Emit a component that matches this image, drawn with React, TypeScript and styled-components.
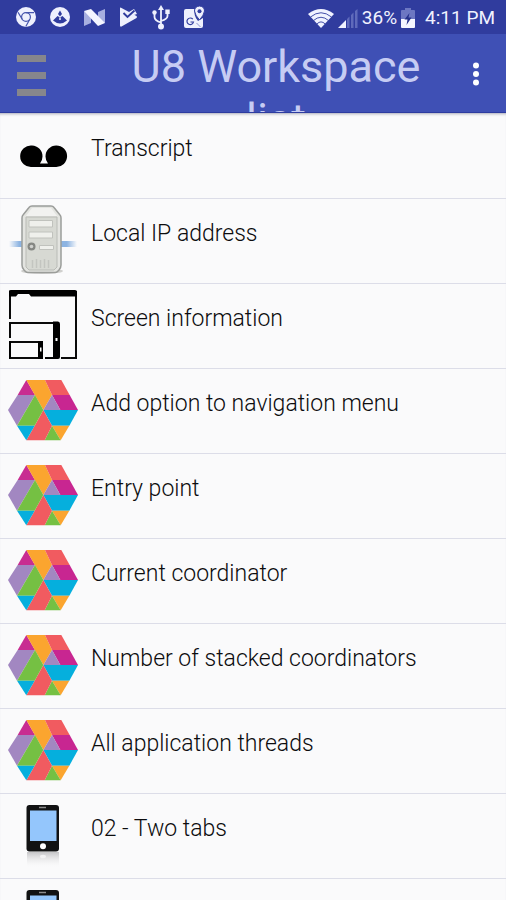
import React from "react";
import styled, { createGlobalStyle } from "styled-components";

const GlobalStyle = createGlobalStyle`
  *, *::before, *::after { box-sizing: border-box; }
  body {
    margin: 0;
    background: #fafafb;
    color: #0c0c0e;
    font-family: Roboto, "Liberation Sans", sans-serif;
  }
`;

const Screen = styled.div`
  display: flex;
  flex-direction: column;
  height: 100vh;
  overflow: hidden;
`;

const StatusBar = styled.div`
  display: flex;
  flex: none;
  align-items: center;
  justify-content: space-between;
  height: 34px;
  padding: 0 11px 0 16px;
  background: #303c9e;
  color: #f0f2ff;
`;

const Notifications = styled.div`
  display: flex;
  align-items: center;
  gap: 14px;
`;

const DeviceState = styled.div`
  display: flex;
  align-items: center;
  gap: 4px;
  padding-top: 2px;
  font-size: 19px;
  line-height: 24px;
`;

const Clock = styled.time`
  margin-left: 6px;
`;

const AppBar = styled.header`
  display: flex;
  flex: none;
  align-items: flex-start;
  height: 79px;
  overflow: hidden;
  padding: 0 10px 0 16px;
  background: #3f50b5;
  border-bottom: 1px solid #2d3ca0;
`;

const BarButton = styled.button<{ $width: number; $align: string }>`
  display: flex;
  flex: none;
  align-items: center;
  justify-content: ${(p) => p.$align};
  width: ${(p) => p.$width}px;
  height: 79px;
  padding: 0;
  border: 0;
  background: none;
  color: #ffffff;
  cursor: pointer;
`;

const Title = styled.h1`
  flex: 1;
  margin: 6px 0 0;
  padding: 0 16px;
  color: #c6ccf3;
  font-size: 45px;
  font-weight: 400;
  line-height: 53px;
  text-align: center;
`;

const List = styled.ul`
  flex: 1;
  min-height: 0;
  overflow: hidden;
  margin: 0;
  padding: 1px 0 0;
  list-style: none;
  box-shadow: inset 0 3px 3px -2px #a9abb8;
`;

const Row = styled.li`
  display: flex;
  height: 85px;
  padding: 6px 8px;
  border-bottom: 1px solid #dcdde8;
`;

const RowIcon = styled.span`
  display: flex;
  flex: none;
  align-items: center;
  justify-content: center;
  width: 70px;
  height: 70px;
`;

const RowLabel = styled.span`
  flex: 1;
  margin: 15px 0 0 13px;
  font-size: 23px;
  font-weight: 300;
  line-height: 28px;
`;

const ChromeIcon = () => (
  <svg width="20" height="20" viewBox="0 0 20 20" aria-hidden="true">
    <circle cx="10" cy="10" r="10" fill="#eef0fd" />
    <g fill="none" stroke="#4655ad" strokeWidth="1.2">
      <circle cx="10" cy="10" r="4.4" />
      <path d="M10 5.6H18M6.2 12.2 2 5.2M13.8 12.2 9.8 19.5" />
    </g>
  </svg>
);

const PeakIcon = () => (
  <svg width="20" height="20" viewBox="0 0 20 20" aria-hidden="true">
    <circle cx="10" cy="10" r="10" fill="#eef0fd" />
    <path d="M3 13.5 7.5 9 10 10.5 12.500 9 17 13.500Q13.500 16.500 10 16.500T3 13.500Z" fill="#303c9e" />
    <path d="M10 3.500 12 7 10 9.500 8 7Z" fill="#303c9e" />
    <path d="M10 10.500V13" stroke="#eef0fd" strokeWidth="1.500" />
  </svg>
);

const NougatIcon = () => (
  <svg width="21" height="17" viewBox="0 0 21 17" aria-hidden="true">
    <path d="M0 2 7 6V14L0 17ZM14 3 21 0V14L14 12Z" fill="#a7afe0" />
    <path d="M0 2 7 0 21 14 14 17Z" fill="#f4f5ff" />
  </svg>
);

const PlayCheckIcon = () => (
  <svg width="19" height="20" viewBox="0 0 19 20" aria-hidden="true">
    <path d="M1 1.500Q1 0 2.500 1L17.500 9Q18.500 10 17.500 11L2.500 19.500Q1 20 1 18.500Z" fill="#eef0fd" />
    <path d="M10 5 15 2 18 7 12 9Z" fill="#eef0fd" />
    <path d="M4.500 6 8.500 10 15.500 3.500" fill="none" stroke="#303c9e" strokeWidth="1.900" />
  </svg>
);

const UsbIcon = () => (
  <svg width="18" height="25" viewBox="0 0 18 25" aria-hidden="true">
    <g fill="none" stroke="#eef0fd" strokeWidth="1.8">
      <path d="M9 3V22M9 17.500Q2.500 15.500 2.500 12V8M9 16Q15.500 14 15.500 11V7" />
    </g>
    <g fill="#eef0fd">
      <path d="M9 0 12 5H6Z" />
      <circle cx="2.500" cy="7.500" r="2.200" />
      <path d="M13.300 4.500h4.400V9h-4.400Z" />
      <circle cx="9" cy="21.500" r="3" />
    </g>
  </svg>
);

const MapIcon = () => (
  <svg width="21" height="22" viewBox="0 0 21 22" aria-hidden="true">
    <path d="M2 3H11Q9 9 14 15L19 12V20Q19 22 17 22H2Q0 22 0 20V5Q0 3 2 3Z" fill="#eef0fd" />
    <path d="M15.500 0Q20.500 .5 20.500 5 20 9 15.500 14 11 9 10.500 5 10.500 .5 15.500 0Z" fill="#eef0fd" stroke="#303c9e" strokeWidth="1" />
    <circle cx="15.500" cy="5.200" r="2" fill="#303c9e" />
    <path d="M8.800 13.200A3.300 3.300 0 1 0 9.500 16H6.500" fill="none" stroke="#303c9e" strokeWidth="1.200" />
    <path d="M12.500 17 16.500 21" stroke="#8d96d3" strokeWidth="1" />
  </svg>
);

const WifiIcon = () => (
  <svg width="26" height="19" viewBox="0 0 26 19" aria-hidden="true">
    <path d="M0 5Q13-5 26 5L13 19Z" fill="#f0f2ff" />
    <g fill="none" stroke="#303c9e" strokeWidth="0.9">
      <path d="M2.500 8Q13-.5 23.500 8M5.500 11.500Q13 5 20.500 11.500M9 14.800Q13 11 17 14.800" />
    </g>
  </svg>
);

const SignalIcon = () => (
  <svg width="20" height="19" viewBox="0 0 20 19" aria-hidden="true">
    <path d="M0 19 8 11V19Z" fill="#f0f2ff" />
    <path d="M9 10 11.500 7.500V19H9ZM13 6 15.500 3.500V19H13ZM17 2 19.500 0V19H17Z" fill="#5f6abb" />
  </svg>
);

const BatteryIcon = () => (
  <svg width="14" height="20" viewBox="0 0 14 20" aria-hidden="true">
    <path d="M4 0H10V2H13Q14 2 14 3V12H0V3Q0 2 1 2H4Z" fill="#6d77c2" />
    <path d="M0 11H14V19Q14 20 13 20H1Q0 20 0 19Z" fill="#f5f6ff" />
    <path d="M8.500 5 3.500 11.500H6.500L5.500 17 10.500 9.500H7.500Z" fill="#27328c" />
  </svg>
);

const HamburgerIcon = () => (
  <svg width="30" height="45" viewBox="0 -4 30 45" aria-hidden="true">
    <path d="M1 0H30V7H1ZM1 17H30V24H1ZM1 34H30V41H1Z" fill="#86868c" />
  </svg>
);

const MoreIcon = () => (
  <svg width="8" height="24" viewBox="0 0 8 24" aria-hidden="true">
    <g fill="#ffffff">
      <circle cx="4" cy="3.500" r="3" />
      <circle cx="4" cy="12" r="3" />
      <circle cx="4" cy="20.500" r="3" />
    </g>
  </svg>
);

const TapeIcon = () => (
  <svg width="70" height="70" viewBox="0 0 70 70" aria-hidden="true">
    <path
      d="M24 25.500a10.800 10.800 0 1 0 0 21.500H48a10.800 10.800 0 1 0-10.500-10.500Q37.500 40.500 40 43.500H32Q34.500 40.500 34.500 36.500A10.800 10.800 0 0 0 24 25.500Z"
      fill="#000000"
    />
  </svg>
);

const ServerIcon = () => (
  <svg width="70" height="70" viewBox="0 0 70 70" aria-hidden="true">
    <defs>
      <linearGradient id="cable">
        <stop offset="0" stopColor="#8db4e2" stopOpacity="0" />
        <stop offset="0.150" stopColor="#8db4e2" />
        <stop offset="0.850" stopColor="#8db4e2" />
        <stop offset="1" stopColor="#8db4e2" stopOpacity="0" />
      </linearGradient>
    </defs>
    <path d="M1 36H69V42H1Z" fill="url(#cable)" />
    <ellipse cx="34" cy="66" rx="21" ry="3" fill="#cfcfcd" />
    <path
      d="M24 1H43Q45 1 46 2.500L52 10Q53 11 53 13V60Q53 63 51 65L49.500 66.500Q48.500 67.500 47 67.500H20Q18.500 67.500 17.500 66.500L16 65Q14 63 14 60V13Q14 11 15 10L21 2.500Q22 1 24 1Z"
      fill="#e3e4e0"
      stroke="#9b9d9a"
      strokeWidth="1.500"
    />
    <path d="M24 3H43L49 11H18Z" fill="#f2f2f0" />
    <path d="M18 12H49V62L46 65H21L18 62Z" fill="#d7d9d3" stroke="#b9bbb6" />
    <g fill="#eff0ec" stroke="#c0c2bd">
      <path d="M21 15.500H44.500V22H21ZM21 27H44.500V33H21ZM31.500 40.500H45.500V44.500H31.500Z" />
    </g>
    <circle cx="23.500" cy="41.500" r="4" fill="#858783" />
    <circle cx="23.500" cy="41.500" r="1.800" fill="#d0d1ce" />
    <path d="M24.500 55V63M28.500 54V63M32.500 55V63M36.500 54V63M40.500 55V63" stroke="#c3c5c0" strokeWidth="1.500" />
  </svg>
);

const ScreensIcon = () => (
  <svg width="70" height="70" viewBox="0 0 70 70" aria-hidden="true">
    <g fill="none" stroke="#0a0a0a" strokeWidth="2">
      <path d="M2 29V2H68V68H53M2 48V33H50M2 51V68H33V52H2Z" />
      <path d="M37 68H48" />
    </g>
    <path d="M1 1Q1 0 3 0H67Q69 0 69 2V6.500H23L21 4H10L8 6.500H1Z" fill="#000000" />
    <path d="M45 31.500H50Q52 31.500 52 34V67Q52 69 50 69H37V67.500H45ZM30 51H35V69H30ZM1 51H3V69H1Z" fill="#000000" />
    <path d="M47.500 48H49.500V51H47.500ZM32 57.500H33.500V61.500H32Z" fill="#ffffff" />
  </svg>
);

const HexagonIcon = () => (
  <svg width="70" height="62" viewBox="23 28 210 184" aria-hidden="true">
    <path d="M78 30 104 75H52Z" fill="#c82d91" />
    <path d="M78 30H134L155 75 129 120Z" fill="#fba52f" />
    <path d="M134 30H183L208 75H155Z" fill="#f15b60" />
    <path d="M155 75H208L233 120H180Z" fill="#c82691" />
    <path d="M155 75 180 120H129Z" fill="#a287c1" />
    <path d="M129 120H233L207 167H155Z" fill="#05afdd" />
    <path d="M155 167H207L181 211Z" fill="#fba52f" />
    <path d="M155 167 181 211H133Z" fill="#75c043" />
    <path d="M129 120 155 167 133 211H78L103 167Z" fill="#f15b60" />
    <path d="M52 75H104L50 167 23 120Z" fill="#a287c1" />
    <path d="M104 75 129 120 103 167H50Z" fill="#75c043" />
    <path d="M50 167H103L78 211Z" fill="#05afdd" />
  </svg>
);

const PhoneIcon = () => (
  <svg width="70" height="70" viewBox="0 0 70 70" aria-hidden="true">
    <defs>
      <linearGradient id="reflection" x1="0" y1="0" x2="0" y2="1">
        <stop offset="0" stopColor="#c4c4c6" />
        <stop offset="1" stopColor="#fafafb" stopOpacity="0" />
      </linearGradient>
    </defs>
    <path d="M19 52H51V68H19Z" fill="url(#reflection)" />
    <ellipse cx="35" cy="56.500" rx="3" ry="1.800" fill="#f2f2f3" />
    <rect x="18.500" y="5" width="32.500" height="46.500" rx="3" fill="#111213" />
    <path d="M22 10.500H48.500V41H22Z" fill="#94c6fc" />
    <path d="M31 7.500H38" stroke="#8b8b8b" strokeWidth="1.500" />
    <circle cx="35" cy="46.300" r="3" fill="#ffffff" />
  </svg>
);

const rows: { label?: string; Icon: React.ComponentType }[] = [
  { label: "Transcript", Icon: TapeIcon },
  { label: "Local IP address", Icon: ServerIcon },
  { label: "Screen information", Icon: ScreensIcon },
  { label: "Add option to navigation menu", Icon: HexagonIcon },
  { label: "Entry point", Icon: HexagonIcon },
  { label: "Current coordinator", Icon: HexagonIcon },
  { label: "Number of stacked coordinators", Icon: HexagonIcon },
  { label: "All application threads", Icon: HexagonIcon },
  { label: "02 - Two tabs", Icon: PhoneIcon },
  { Icon: PhoneIcon },
];

export default function App() {
  return (
    <Screen>
      <GlobalStyle />
      <StatusBar>
        <Notifications>
          <ChromeIcon />
          <PeakIcon />
          <NougatIcon />
          <PlayCheckIcon />
          <UsbIcon />
          <MapIcon />
        </Notifications>
        <DeviceState>
          <WifiIcon />
          <SignalIcon />
          <span>36%</span>
          <BatteryIcon />
          <Clock>4:11 PM</Clock>
        </DeviceState>
      </StatusBar>
      <AppBar>
        <BarButton type="button" aria-label="Open navigation" $width={80} $align="flex-start">
          <HamburgerIcon />
        </BarButton>
        <Title>U8 Workspace list</Title>
        <BarButton type="button" aria-label="More options" $width={40} $align="center">
          <MoreIcon />
        </BarButton>
      </AppBar>
      <List>
        {rows.map(({ label, Icon }, index) => (
          <Row key={index}>
            <RowIcon>
              <Icon />
            </RowIcon>
            {label && <RowLabel>{label}</RowLabel>}
          </Row>
        ))}
      </List>
    </Screen>
  );
}
